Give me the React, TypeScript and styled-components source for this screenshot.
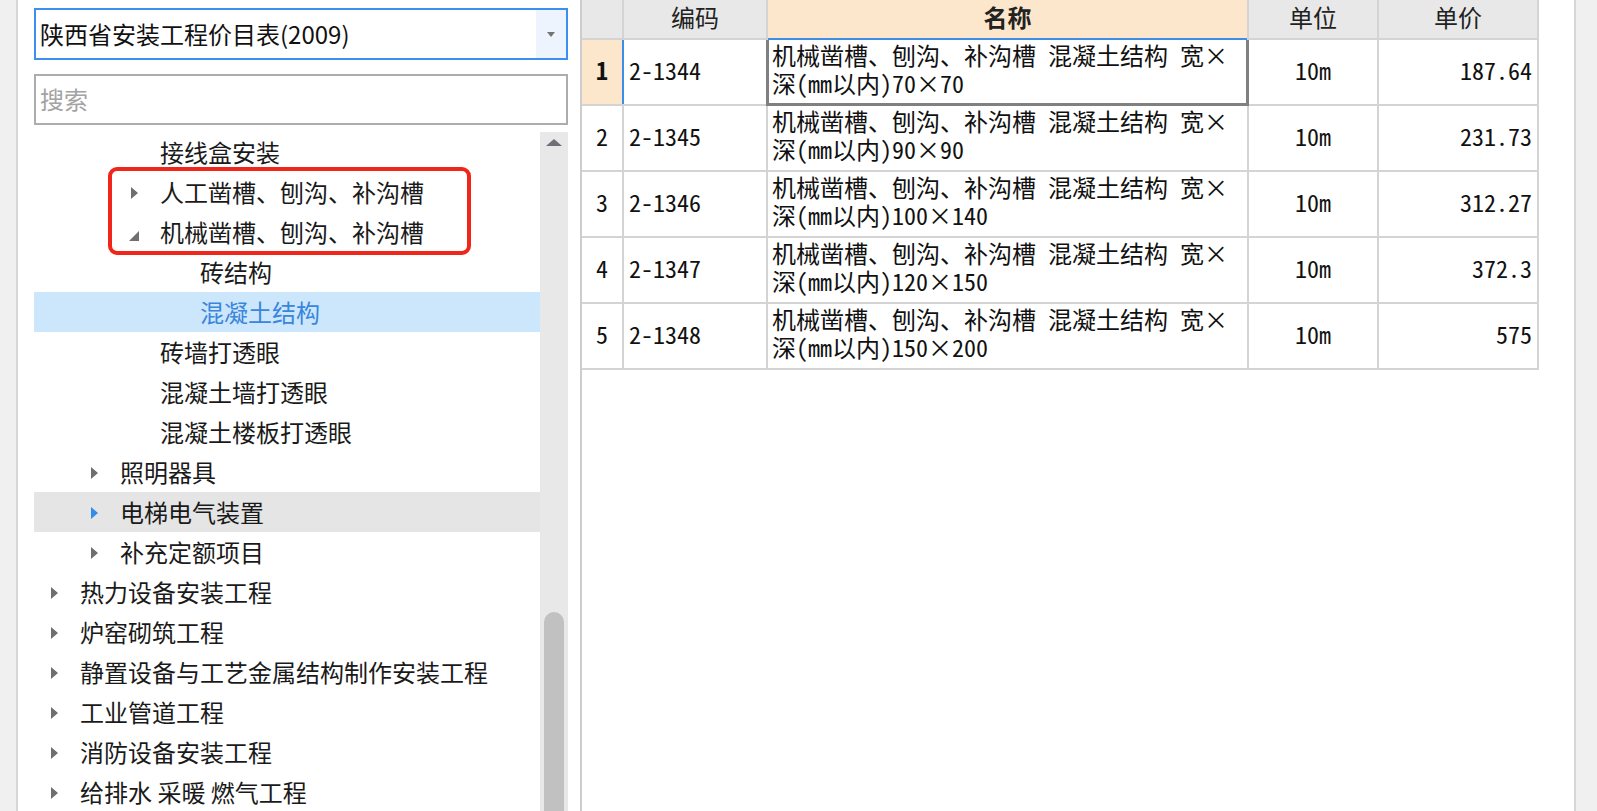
import React from 'react';
import styled, { createGlobalStyle } from 'styled-components';

const uiFont = `"Noto Sans CJK SC", "Noto Sans", sans-serif`;
const gridFont = `"Noto Sans Mono CJK SC", "Noto Sans CJK SC", "Liberation Mono", monospace`;

const GlobalStyle = createGlobalStyle`
  html, body {
    margin: 0;
    padding: 0;
    background: #fff;
    overflow: hidden;
  }
  #root {
    width: 1597px;
    height: 811px;
  }
`;

type TreeNode = {
  level: number;
  label: string;
  arrow?: 'collapsed' | 'expanded';
  state?: 'selected' | 'hover';
};

const TREE: TreeNode[] = [
  { level: 3, label: '接线盒安装' },
  { level: 3, label: '人工凿槽、刨沟、补沟槽', arrow: 'collapsed' },
  { level: 3, label: '机械凿槽、刨沟、补沟槽', arrow: 'expanded' },
  { level: 4, label: '砖结构' },
  { level: 4, label: '混凝土结构', state: 'selected' },
  { level: 3, label: '砖墙打透眼' },
  { level: 3, label: '混凝土墙打透眼' },
  { level: 3, label: '混凝土楼板打透眼' },
  { level: 2, label: '照明器具', arrow: 'collapsed' },
  { level: 2, label: '电梯电气装置', arrow: 'collapsed', state: 'hover' },
  { level: 2, label: '补充定额项目', arrow: 'collapsed' },
  { level: 1, label: '热力设备安装工程', arrow: 'collapsed' },
  { level: 1, label: '炉窑砌筑工程', arrow: 'collapsed' },
  { level: 1, label: '静置设备与工艺金属结构制作安装工程', arrow: 'collapsed' },
  { level: 1, label: '工业管道工程', arrow: 'collapsed' },
  { level: 1, label: '消防设备安装工程', arrow: 'collapsed' },
  { level: 1, label: '给排水 采暖 燃气工程', arrow: 'collapsed' },
];

type Quota = { code: string; name: string; unit: string; price: string };

const QUOTAS: Quota[] = [
  { code: '2-1344', name: '机械凿槽、刨沟、补沟槽 混凝土结构 宽×\n深(mm以内)70×70', unit: '10m', price: '187.64' },
  { code: '2-1345', name: '机械凿槽、刨沟、补沟槽 混凝土结构 宽×\n深(mm以内)90×90', unit: '10m', price: '231.73' },
  { code: '2-1346', name: '机械凿槽、刨沟、补沟槽 混凝土结构 宽×\n深(mm以内)100×140', unit: '10m', price: '312.27' },
  { code: '2-1347', name: '机械凿槽、刨沟、补沟槽 混凝土结构 宽×\n深(mm以内)120×150', unit: '10m', price: '372.3' },
  { code: '2-1348', name: '机械凿槽、刨沟、补沟槽 混凝土结构 宽×\n深(mm以内)150×200', unit: '10m', price: '575' },
];

const Screen = styled.div`
  display: flex;
  width: 1597px;
  height: 811px;
  overflow: hidden;
  background: #fff;
`;

const Gutter = styled.div`
  width: 16px;
  flex: none;
  background: #f0f0f0;
  border-right: 2px solid #d6d6d6;
`;

const LeftPanel = styled.div`
  width: 562px;
  flex: none;
  display: flex;
  flex-direction: column;
  padding: 8px 12px 0 16px;
  box-sizing: border-box;
  font-family: ${uiFont};
`;

const Combo = styled.div`
  display: flex;
  height: 52px;
  border: 2px solid #3d8fef;
  box-sizing: border-box;
`;

const ComboText = styled.div`
  flex: 1;
  display: flex;
  align-items: center;
  padding: 0 0 1px 4px;
  font-size: 24px;
  line-height: 30px;
  color: #111;
`;

const ComboButton = styled.div`
  width: 30px;
  display: flex;
  align-items: center;
  justify-content: center;
  background: #edf4fd;
  &::after {
    content: '';
    border-left: 4px solid transparent;
    border-right: 4px solid transparent;
    border-top: 5px solid #737373;
  }
`;

const Search = styled.div`
  margin-top: 14px;
  height: 51px;
  border: 2px solid #adadad;
  box-sizing: border-box;
  display: flex;
  align-items: center;
  padding: 0 0 2px 4px;
  font-size: 24px;
  line-height: 30px;
  color: #a3a3a3;
`;

const TreeArea = styled.div`
  margin-top: 7px;
  flex: 1;
  display: flex;
  min-height: 0;
`;

const TreeList = styled.div`
  position: relative;
  flex: 1;
  overflow: hidden;
`;

const Row = styled.div<{ $state?: 'selected' | 'hover' }>`
  display: flex;
  align-items: center;
  height: 40px;
  padding: 2px 0;
  box-sizing: border-box;
  font-size: 24px;
  line-height: 30px;
  white-space: nowrap;
  color: ${(p) => (p.$state === 'selected' ? '#3a86dc' : '#1a1a1a')};
  background: ${(p) =>
    p.$state === 'selected' ? '#cce6fb' : p.$state === 'hover' ? '#e5e5e5' : 'transparent'};
`;

const ArrowSlot = styled.div<{ $level: number }>`
  width: 29px;
  flex: none;
  margin-left: ${(p) => 17 + (p.$level - 1) * 40}px;
  display: flex;
  align-items: center;
`;

const Collapsed = styled.span<{ $hot?: boolean }>`
  display: block;
  margin-top: 1px;
  border-top: 6px solid transparent;
  border-bottom: 6px solid transparent;
  border-left: 7px solid ${(p) => (p.$hot ? '#2f8ded' : '#6e6e6e')};
`;

const Expanded = styled.span`
  display: block;
  margin: 7px 0 0 -2px;
  border-left: 10px solid transparent;
  border-bottom: 10px solid #707070;
`;

const Callout = styled.div`
  position: absolute;
  left: 74px;
  top: 35px;
  width: 363px;
  height: 88px;
  border: 4px solid #f0261b;
  border-radius: 9px;
  box-sizing: border-box;
  pointer-events: none;
`;

const ScrollTrack = styled.div`
  position: relative;
  width: 28px;
  flex: none;
  background: #e8e8e8;
  overflow: hidden;
  &::before {
    content: '';
    position: absolute;
    left: 6px;
    top: 7px;
    border-left: 8px solid transparent;
    border-right: 8px solid transparent;
    border-bottom: 7px solid #6f6f78;
  }
`;

const ScrollThumb = styled.div`
  position: absolute;
  left: 4px;
  top: 480px;
  width: 20px;
  height: 400px;
  border-radius: 10px;
  background: #c1c1c1;
`;

const Splitter = styled.div`
  width: 2px;
  flex: none;
  background: #cdcdcd;
`;

const RightPanel = styled.div`
  flex: 1;
  min-width: 0;
  background: #fff;
`;

const Grid = styled.div`
  display: grid;
  grid-template-columns: 40px 142px 479px 128px 158px;
  grid-template-rows: 38px;
  grid-auto-rows: 64px;
  gap: 2px;
  width: fit-content;
  background: #d4d4d4;
  border-right: 2px solid #d4d4d4;
  border-bottom: 2px solid #d4d4d4;
  font-family: ${gridFont};
  font-size: 24px;
  color: #111;
`;

const HeadCell = styled.div<{ $active?: boolean }>`
  display: flex;
  align-items: flex-start;
  justify-content: center;
  padding-top: 3px;
  box-sizing: border-box;
  line-height: 28px;
  background: ${(p) => (p.$active ? '#fde7cc' : '#e8e8e8')};
  font-weight: ${(p) => (p.$active ? 700 : 400)};
  color: #222;
  box-shadow: ${(p) => (p.$active ? '0 2px 0 #3c8ee8' : 'none')};
  position: relative;
  z-index: ${(p) => (p.$active ? 1 : 0)};
`;

const RowHead = styled.div<{ $active?: boolean }>`
  display: flex;
  align-items: center;
  justify-content: center;
  padding-bottom: 4px;
  box-sizing: border-box;
  line-height: 24px;
  background: ${(p) => (p.$active ? '#fde7cc' : '#fff')};
  font-weight: ${(p) => (p.$active ? 700 : 400)};
  box-shadow: ${(p) => (p.$active ? '2px 0 0 #3c8ee8' : 'none')};
  position: relative;
  z-index: ${(p) => (p.$active ? 1 : 0)};
`;

const Cell = styled.div<{ $align?: 'left' | 'center' | 'right' }>`
  display: flex;
  align-items: center;
  justify-content: ${(p) =>
    p.$align === 'right' ? 'flex-end' : p.$align === 'center' ? 'center' : 'flex-start'};
  padding: 0 5px 4px;
  box-sizing: border-box;
  line-height: 24px;
  background: #fff;
  white-space: nowrap;
`;

const NameCell = styled.div<{ $focused?: boolean }>`
  position: relative;
  padding: 1px 4px 0;
  background: #fff;
  line-height: 28px;
  white-space: pre-line;
  ${(p) =>
    p.$focused &&
    `
    &::after {
      content: '';
      position: absolute;
      left: -2px;
      right: -2px;
      top: 0;
      bottom: -2px;
      border: 3px solid #808080;
      border-top: none;
    }
  `}
`;

const EdgeStrip = styled.div`
  width: 21px;
  flex: none;
  background: #f0f0f0;
  border-left: 2px solid #d6d6d6;
`;

const TreeRow = ({ node }: { node: TreeNode }) => (
  <Row $state={node.state}>
    <ArrowSlot $level={node.level}>
      {node.arrow === 'collapsed' && <Collapsed $hot={node.state === 'hover'} />}
      {node.arrow === 'expanded' && <Expanded />}
    </ArrowSlot>
    {node.label}
  </Row>
);

export default function App() {
  return (
    <>
      <GlobalStyle />
      <Screen>
        <Gutter />
        <LeftPanel>
          <Combo>
            <ComboText>陕西省安装工程价目表(2009)</ComboText>
            <ComboButton />
          </Combo>
          <Search>搜索</Search>
          <TreeArea>
            <TreeList>
              {TREE.map((node) => (
                <TreeRow key={node.label} node={node} />
              ))}
              <Callout />
            </TreeList>
            <ScrollTrack>
              <ScrollThumb />
            </ScrollTrack>
          </TreeArea>
        </LeftPanel>
        <Splitter />
        <RightPanel>
          <Grid>
            <HeadCell />
            <HeadCell>编码</HeadCell>
            <HeadCell $active>名称</HeadCell>
            <HeadCell>单位</HeadCell>
            <HeadCell>单价</HeadCell>
            {QUOTAS.map((q, i) => (
              <React.Fragment key={q.code}>
                <RowHead $active={i === 0}>{i + 1}</RowHead>
                <Cell>{q.code}</Cell>
                <NameCell $focused={i === 0}>{q.name}</NameCell>
                <Cell $align="center">{q.unit}</Cell>
                <Cell $align="right">{q.price}</Cell>
              </React.Fragment>
            ))}
          </Grid>
        </RightPanel>
        <EdgeStrip />
      </Screen>
    </>
  );
}
